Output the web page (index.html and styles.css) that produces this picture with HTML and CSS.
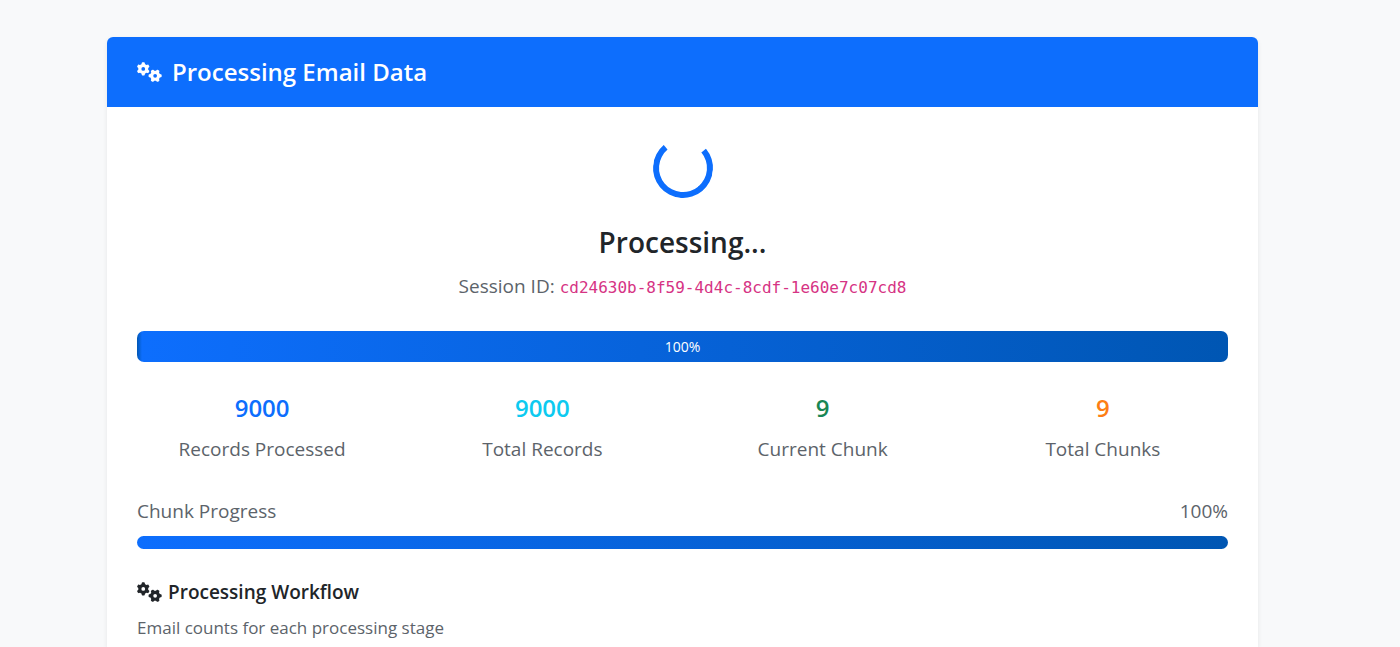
FILE: index.html
```html
<!DOCTYPE html>
<html lang="en">
<head>
<meta charset="utf-8">
<meta name="viewport" content="width=device-width, initial-scale=1">
<title>Processing Email Data</title>
<link rel="stylesheet" href="styles.css">
</head>
<body>
<svg class="sprite" aria-hidden="true">
  <symbol id="gears" viewBox="0 0 640 512">
    <path d="M308.5 135.3c7.1-6.3 9.9-16.2 6.2-25c-2.3-5.3-4.8-10.5-7.6-15.5L304 89.4c-3-5-6.3-9.9-9.8-14.6c-5.7-7.6-15.7-10.1-24.7-7.1l-28.2 9.3c-10.7-8.8-23-16-36.2-20.9L199 27.1c-1.9-9.3-9.1-16.7-18.5-17.8C173.9 8.4 167.2 8 160.4 8h-.7c-6.8 0-13.5 .4-20.1 1.2c-9.4 1.1-16.6 8.6-18.5 17.8L115 56.1c-13.3 5-25.5 12.1-36.2 20.9L50.5 67.8c-9-3-19-.5-24.7 7.1c-3.5 4.7-6.8 9.6-9.9 14.6l-3 5.3c-2.8 5-5.3 10.2-7.6 15.6c-3.7 8.7-.9 18.6 6.2 25l22.2 19.8C32.6 161.9 32 168.9 32 176s.6 14.1 1.7 20.9L11.5 216.7c-7.1 6.3-9.9 16.2-6.2 25c2.3 5.3 4.8 10.5 7.6 15.6l3 5.2c3 5.1 6.3 9.9 9.9 14.6c5.7 7.6 15.7 10.1 24.7 7.1l28.2-9.3c10.7 8.8 23 16 36.2 20.9l6.1 29.1c1.9 9.3 9.1 16.7 18.5 17.8c6.7 .8 13.5 1.2 20.4 1.2s13.7-.4 20.4-1.2c9.4-1.1 16.6-8.6 18.5-17.8l6.1-29.1c13.3-5 25.5-12.1 36.2-20.9l28.2 9.3c9 3 19 .5 24.7-7.1c3.5-4.7 6.8-9.5 9.8-14.6l3.1-5.4c2.8-5 5.3-10.2 7.6-15.5c3.7-8.7 .9-18.6-6.2-25l-22.2-19.8c1.1-6.8 1.7-13.8 1.7-20.9s-.6-14.1-1.7-20.9l22.2-19.8zM112 176a48 48 0 1 1 96 0 48 48 0 1 1 -96 0zM504.7 500.5c6.3 7.1 16.2 9.9 25 6.2c5.3-2.3 10.5-4.8 15.5-7.6l5.4-3.1c5-3 9.9-6.3 14.6-9.8c7.6-5.7 10.1-15.7 7.1-24.7l-9.3-28.2c8.8-10.7 16-23 20.9-36.2l29.1-6.1c9.3-1.9 16.7-9.1 17.8-18.5c.8-6.7 1.2-13.5 1.2-20.4s-.4-13.7-1.2-20.4c-1.1-9.4-8.6-16.6-17.8-18.5L583.9 307c-5-13.3-12.1-25.5-20.9-36.2l9.3-28.2c3-9 .5-19-7.1-24.7c-4.7-3.5-9.6-6.8-14.6-9.9l-5.3-3c-5-2.8-10.2-5.3-15.6-7.6c-8.7-3.7-18.6-.9-25 6.2l-19.8 22.2c-6.8-1.1-13.8-1.7-20.9-1.7s-14.1 .6-20.9 1.7l-19.8-22.2c-6.3-7.1-16.2-9.9-25-6.2c-5.3 2.3-10.5 4.8-15.6 7.6l-5.2 3c-5.1 3-9.9 6.3-14.6 9.9c-7.6 5.7-10.1 15.7-7.1 24.7l9.3 28.2c-8.8 10.7-16 23-20.9 36.2L315.1 313c-9.3 1.9-16.7 9.1-17.8 18.5c-.8 6.7-1.2 13.5-1.2 20.4s.4 13.7 1.2 20.4c1.1 9.4 8.6 16.6 17.8 18.5l29.1 6.1c5 13.3 12.1 25.5 20.9 36.2l-9.3 28.2c-3 9-.5 19 7.1 24.7c4.7 3.5 9.5 6.8 14.6 9.8l5.4 3.1c5 2.8 10.2 5.3 15.5 7.6c8.7 3.7 18.6 .9 25-6.2l19.8-22.2c6.8 1.1 13.8 1.7 20.9 1.7s14.1-.6 20.9-1.7l19.8 22.2zM464 304a48 48 0 1 1 0 96 48 48 0 1 1 0-96z"/>
  </symbol>
</svg>
<main class="card">
  <header class="card-header">
    <svg class="icon" aria-hidden="true"><use href="#gears"/></svg>
    <h1 class="card-title">Processing Email Data</h1>
  </header>
  <div class="card-body">
    <section class="status">
      <div class="spinner" role="status" aria-label="Processing"></div>
      <h2 class="status-title">Processing...</h2>
      <p class="session">Session ID: <code class="session-id">cd24630b-8f59-4d4c-8cdf-1e60e7c07cd8</code></p>
    </section>
    <div class="progress" role="progressbar" aria-label="Overall progress" aria-valuenow="100" aria-valuemin="0" aria-valuemax="100">
      <div class="progress-fill" style="width: 100%">100%</div>
    </div>
    <dl class="stats">
      <div class="stat"><dt class="stat-label">Records Processed</dt><dd class="stat-value primary">9000</dd></div>
      <div class="stat"><dt class="stat-label">Total Records</dt><dd class="stat-value info">9000</dd></div>
      <div class="stat"><dt class="stat-label">Current Chunk</dt><dd class="stat-value success">9</dd></div>
      <div class="stat"><dt class="stat-label">Total Chunks</dt><dd class="stat-value warning">9</dd></div>
    </dl>
    <section class="chunk">
      <div class="chunk-head"><span>Chunk Progress</span><span>100%</span></div>
      <div class="chunk-bar" role="progressbar" aria-label="Chunk progress" aria-valuenow="100" aria-valuemin="0" aria-valuemax="100">
        <div class="chunk-fill" style="width: 100%"></div>
      </div>
    </section>
    <section class="workflow">
      <h3 class="workflow-title"><svg class="icon" aria-hidden="true"><use href="#gears"/></svg>Processing Workflow</h3>
      <p class="workflow-note">Email counts for each processing stage</p>
    </section>
  </div>
</main>
</body>
</html>
```
FILE: styles.css
```css
* {
  box-sizing: border-box;
  margin: 0;
}

body {
  display: flex;
  min-height: 100vh;
  padding: 37px 142px 0 107px;
  background: #f8f9fa;
  color: #212529;
  font-family: "Segoe UI", "Open Sans", "Noto Sans", sans-serif;
  font-size: 19px;
  line-height: 30px;
}

.sprite {
  position: absolute;
  width: 0;
  height: 0;
}

.icon {
  flex: none;
  width: 25px;
  height: 20px;
  fill: currentColor;
}

.card {
  flex: 1;
  min-width: 0;
  background: #fff;
  border-radius: 6px 6px 0 0;
  box-shadow: 0 2px 5px rgba(0, 0, 0, 0.08);
}

.card-header {
  display: flex;
  align-items: center;
  gap: 10px;
  padding: 20px 30px;
  border-radius: 6px 6px 0 0;
  background: #0d6efd;
  color: #fff;
}

.card-title {
  font-size: 24px;
  font-weight: 600;
  line-height: 30px;
}

.card-body {
  padding: 31px 30px 0;
}

.status {
  display: flex;
  flex-direction: column;
  align-items: center;
}

.spinner {
  width: 60px;
  height: 60px;
  margin-bottom: 26px;
  border: 6px solid #0d6efd;
  border-top-color: transparent;
  border-radius: 50%;
  transform: rotate(5deg);
}

.status-title {
  margin-bottom: 11px;
  font-size: 28px;
  font-weight: 600;
  line-height: 36px;
}

.session {
  margin-bottom: 28px;
  color: #5c636a;
}

.session-id {
  color: #d63384;
  font-family: "DejaVu Sans Mono", monospace;
  font-size: 16px;
}

.progress {
  overflow: hidden;
  border-radius: 7px;
  background: #e9ecef;
}

.progress-fill {
  background: linear-gradient(90deg, #0056b3, #0d6efd 5px, #0056b3);
  color: #fff;
  font-size: 14px;
  line-height: 31px;
  text-align: center;
}

.stats {
  display: grid;
  grid-template-columns: repeat(4, 1fr);
  margin: 31px -15px 32px;
  text-align: center;
}

.stat {
  display: flex;
  flex-direction: column-reverse;
  gap: 11px;
}

.stat-label {
  color: #5c636a;
}

.stat-value {
  font-size: 24px;
  font-weight: 600;
}

.primary {
  color: #0d6efd;
}

.info {
  color: #0dcaf0;
}

.success {
  color: #198754;
}

.warning {
  color: #fd7e14;
}

.chunk-head {
  display: flex;
  justify-content: space-between;
  margin-bottom: 10px;
  color: #5c636a;
}

.chunk-bar {
  overflow: hidden;
  border-radius: 7px;
  background: #e9ecef;
}

.chunk-fill {
  height: 13px;
  background: linear-gradient(90deg, #0d6efd, #0056b3);
}

.workflow {
  padding-top: 28px;
}

.workflow-title {
  display: flex;
  align-items: center;
  gap: 6px;
  margin-bottom: 6px;
  font-size: 19px;
  font-weight: 600;
  line-height: 30px;
}

.workflow-note {
  color: #5c636a;
  font-size: 17px;
}
```
